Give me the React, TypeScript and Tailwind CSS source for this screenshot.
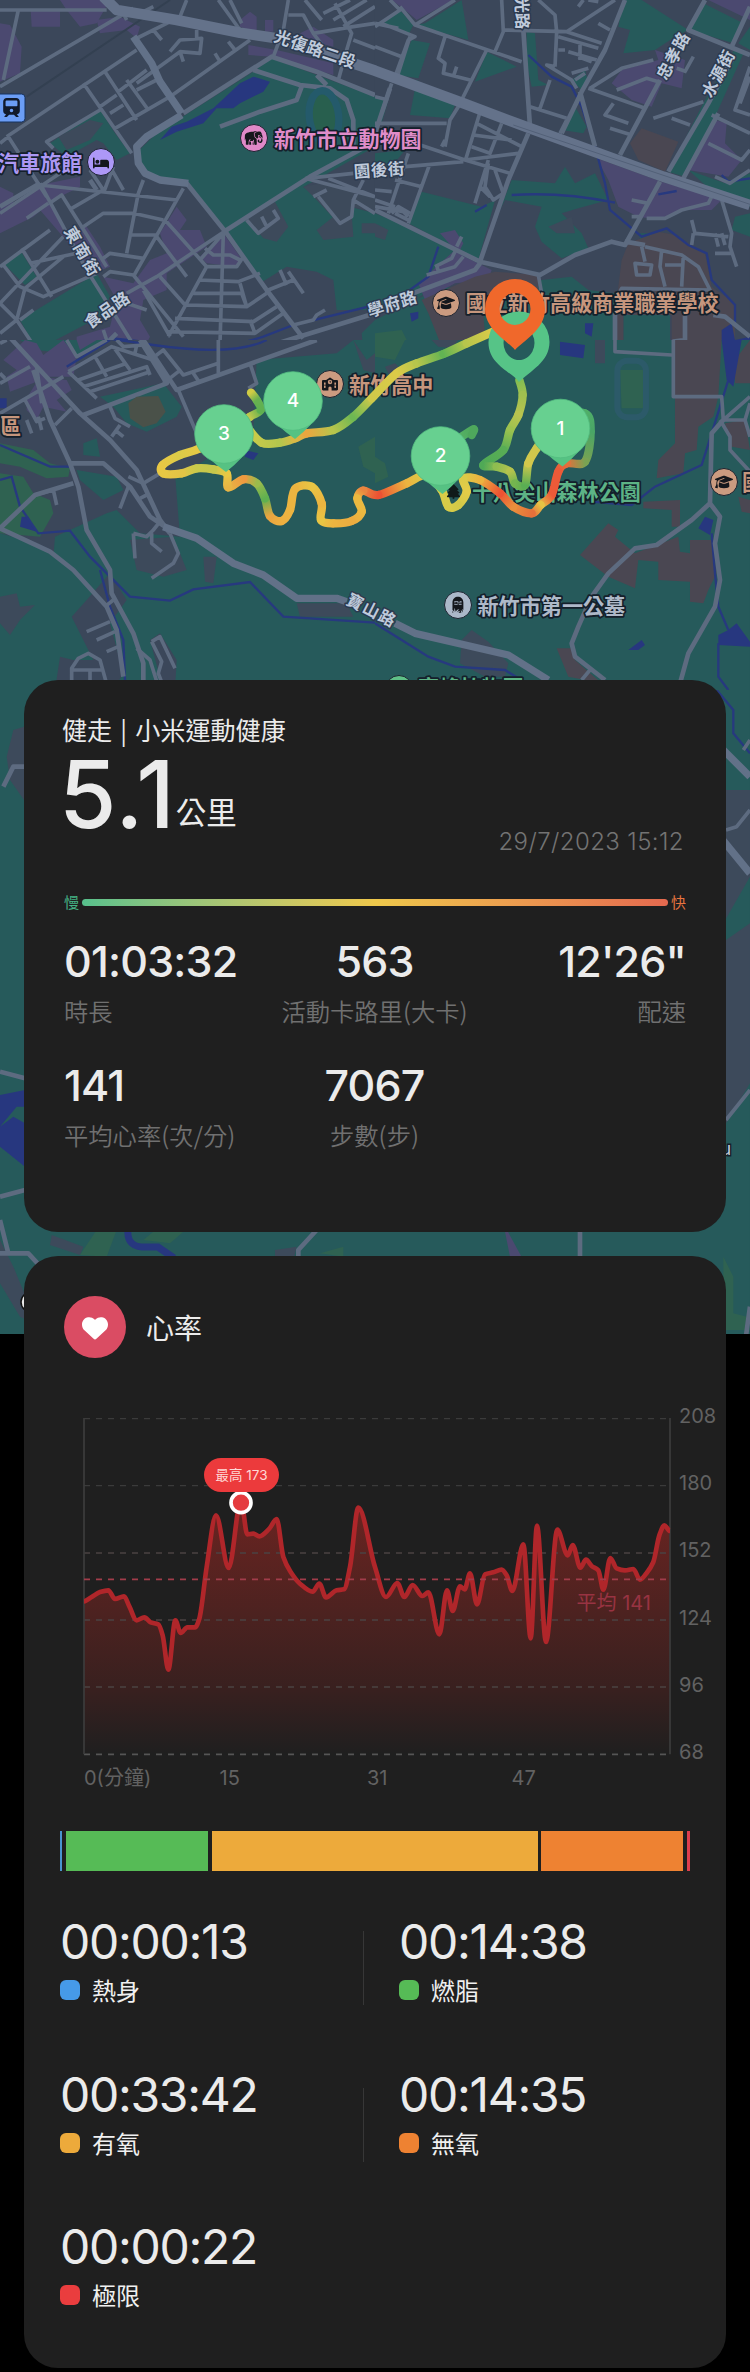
import type { ReactNode } from "react";
import { FaBed, FaGraduationCap, FaHeart, FaSchool, FaTrain, FaTree } from "react-icons/fa6";
import { GiElephant, GiTombstone } from "react-icons/gi";

type Tile = {
  x: number;
  y: number;
  blocks: string;
  parks: string;
  holes: string;
  shops: string;
  campus: string;
  fields: string;
  water: string;
  streams: string;
  minor: string;
  medium: string;
  major: string;
};

// Map geometry, one entry per tile, in units of a third of a pixel.
const tiles: Tile[] = [
  {
    x: 0,
    y: 0,
    blocks: "M0,0H1125V1050H0Z",
    parks:
      "M815,175 L950,225 L1125,290 V440 L680,690 L560,550 L470,540 L425,500 L418,450 L470,400 L760,215Z M680,690 L900,555 L970,600 L1125,640 V930 L1010,930 L1000,840 L950,815 L860,800 L780,850Z M150,430 L300,330 L345,400 L390,460 L350,480 L310,430 L290,420 L200,470Z M10,790 L60,750 L110,830 L75,855Z M60,960 L290,820 L330,890 L300,950 L110,1050Z M1085,1000 L1125,960 V1050 H1090Z",
    holes:
      "M740,655 L825,605 L865,680 L830,725 L790,715Z M950,690 L1000,650 L1055,640 L1060,710 L970,720Z M1085,670H1125V700H1085Z M910,560 L990,545 L1125,590 V640 L1060,620 L1050,670 L1020,675 L950,600Z M175,410 L270,360 L310,370 L270,420 L200,450Z",
    shops:
      "M0,70 L30,75 L65,140 L60,220 L0,245Z M92,30H180V80H95Z M180,0H330L290,70 L240,80 L200,30Z M290,60 L360,50 L420,80 L410,115 L380,90 L300,100Z M720,60 L750,35 L770,50V100L720,80Z M795,60H820V95H795Z M745,135 L830,150 L1000,190 L1000,225 L815,170 L745,165Z M900,100 L940,80 L1000,120 V140 L920,120Z M0,560 L40,580 V620 L0,640Z M0,640 L120,555 L240,530 L240,560 L160,600 L100,650 L0,700Z M120,630 L150,600 L190,690 L260,680 L300,740 L330,800 L280,820 L230,760 L180,700Z M310,830 L400,850 L450,780 L500,760 L480,700 L530,620 L560,660 L540,690 L600,690 L620,740 L560,780 L500,820 L500,870 L430,900 L420,960 L450,1010 L430,1050 L230,1050 L230,1010 L330,980 L350,900Z M600,770 L670,700 L720,770 L710,800 L620,790Z",
    campus: "",
    fields: "M940,310 L1000,290 L1010,370 L985,395 L940,380Z",
    water:
      "M480,420 L515,380 L560,365 L640,325 L720,250 L760,230 L810,245 L790,275 L720,310 L700,325 L650,325 L610,370 L530,395Z",
    streams: "M200,1050 L340,1015 L520,1035 Q640,1060 790,1010 L880,975 L1125,915",
    minor:
      "M0,30H320 M55,30 L10,240 M0,260 L400,25 M460,20 L420,40 M20,410 L410,150 M25,410 L140,590 M160,445 L140,425 L300,330 M0,430 L25,410 M380,60 L370,40 M400,120 L500,70 L540,50 L560,0 M460,90 L485,120 M410,250 L540,155 L600,160 L605,115 L540,120 L510,155 M540,155 L550,185 M250,250 L395,460 M315,215 L410,360 M380,240 L445,330 M355,275 L440,210 M410,270 L470,240 M300,320 L350,285 M330,340 L370,315 M345,385 L510,290 M510,290 L750,120 M645,160 L660,185 M685,125 L705,150 M590,90V120 M655,0 L720,90 M690,0 L725,70 M865,0 L850,90 L820,170 M865,45 L910,45 L940,100 L1060,80 M940,100 L970,140 M915,0 L965,60 M1005,10 L1055,100 L1040,150 L1015,240 M1060,80 L1125,70 M970,40 L1050,0 M1000,60 L1100,0 M1030,80 L1125,20 M1060,120 L1125,145 M270,510 L310,570 M340,500 L310,580 M330,500 L370,570 M0,640 L240,480 M120,555 L530,600 M155,605 L185,585 L270,720 L320,800 M80,655 L145,610 M250,680 L310,640 L400,640 L490,660 M215,625 L310,570 M415,580 L380,760 M390,705 H470 M430,540 L415,580 M550,565 L400,830 M495,660 L620,800 M470,710 L560,830 M310,775 L330,760 L430,775 M120,550 L260,810 L410,1050 M310,830 L330,815 L400,825 L550,1010 M0,910 L190,710 M10,795 L60,860 L130,890 L290,820 M75,865 L190,770 M0,800 L150,690 M65,745 L155,890 M90,790 L230,760 M0,910 L50,960 L110,1050 M0,1000 L50,960 L75,865 M60,960 L100,930 M200,1020 L220,1050 M310,990 L330,1050 M380,880 L470,830 L680,690 M440,930 L380,910 M480,830 L560,920 M430,870 L510,1010 M670,700 L660,1030 M670,700 L600,780 M615,745 L640,765 L690,765 L720,780 M620,800 L710,800 L730,770 M595,840 L715,845 L780,820 M620,800 L505,1010 M580,880 L725,880 L740,920 L800,880 M560,915 L740,920 L720,850 M525,955 L760,965 L830,920 M500,995 L765,1000 L750,960 M765,1000 L850,940 M740,660 L775,700 L835,655 L820,630 M800,680 L785,650 M840,810 L860,855 M865,815 L910,880 M805,870 L880,840 M880,975 L940,960 L950,945 L975,930 M920,535 L1060,520 M915,535 L1125,590 M940,590 L980,570 M955,590 L1020,670 L1055,650 L1060,600 L1090,540 M1060,600 L1125,640 M985,535 L1125,590",
    medium:
      "M0,620 L120,550 M550,340 L760,205 L815,170 L950,215 L1125,285 M760,210 L900,255 L990,265 L1040,300 L1060,360 L1060,440 M905,260 L890,300 L780,335 L660,380 M950,225 L980,255 M560,550 L680,700 L800,870 L910,1015 M680,690 L930,530 L1125,425 M800,1040 L1125,940 M270,540 L290,570 M300,1050 L350,1000",
    major: "M400,110 L455,190 L480,245 L545,340 M545,345 L440,410 L410,440 L415,490 L435,520 L480,540 L565,550",
  },
  {
    x: 375,
    y: 0,
    blocks: "M0,0H1125V1050H0Z",
    parks:
      "M150,70 L260,0 L280,120 L120,75Z M20,75 L75,30 L115,75 L100,105Z M110,120 L165,130 L130,235 L65,225Z M335,155 L425,200 L300,245Z M455,95 L480,100 L490,240 L520,255 L470,260 L455,190Z M125,240 L240,315 L225,355 L105,345Z M0,290 L40,300 L20,370 L0,370Z M745,0 L800,0 L940,90 L900,110 L840,150 L745,160 L765,90 L730,80Z M985,10 L1105,70 L1075,130 L945,90Z M1110,150 L1020,350 L930,530 L880,515 L985,310 L1080,145Z M1125,80 L1090,130 L1125,150Z M590,240 L630,210 L640,250 L620,270Z M600,320 L635,380 L625,400 L560,390Z M0,460 L90,450 L50,500 L0,500Z M140,575 L320,620 L360,600 L310,780 L100,670Z M0,640 L100,680 L310,790 L180,860 L90,920 L0,940Z M410,540 L540,550 L570,500 L600,550 L660,520 L700,600 L610,625 L560,640 L620,700 L640,745 L560,775 L500,725 L480,680 L500,620 L390,600 L370,640Z M940,510 L1050,550 L1125,520 L1125,620 L1030,590Z M500,840 L590,830 L640,870 L720,880 V1050 H0 V960 L120,900 L200,860 L330,870Z M745,945H885V1050H745Z M790,700 L850,700 L860,760 L810,760Z M1080,650 L1125,640 V710 L1070,690Z M1010,960 L1060,940 L1060,1050 H1000Z",
    holes: "M0,670 L40,690 L30,720 L0,710Z M520,680 L590,650 L600,700 L545,700Z",
    shops:
      "M50,0H235 L125,60 L90,30Z M1000,0H1125V60Z M840,150 L930,180 L920,265 L860,250 L830,320 L770,300 L710,250 L740,210 L850,180Z M1020,360 L1055,370 L1050,430 L1100,480 L1060,530 L940,510 L980,430Z M665,475 L860,545 L1040,600 L1010,630 L920,630 L860,660 L790,650 L730,620 L700,540Z M195,700 L240,690 L265,730 L250,760 L350,810 L340,840 L240,850 L150,900 L130,850 L240,750Z",
    campus:
      "M800,385 L910,425 L870,515 L790,480 L765,430Z M850,695 L900,705 L990,760 L1010,860 L1080,910 V1050 H890 V945 H745 V1050 H720 L730,860 L740,780 L760,730Z M360,815 L490,825 L490,880 L320,890 L330,1000 L200,1040 L160,940 L140,900 L300,830Z",
    fields: "M0,1000 L80,990 L110,1050 H0Z",
    water:
      "M105,940 L130,935 L130,955 L110,965Z M630,970 L655,970 L650,1010 L630,1000Z M555,1025 L630,1035 L620,1050H550Z M1040,990 L1070,970 L1080,1020 L1125,1010 V1050 H1040Z",
    streams:
      "M460,165 L530,230 L590,260 L620,320 L660,440 L690,550 L705,630 L800,710 L875,685 L940,735 L995,760 L1010,840 L1080,915 V980 M410,585 Q560,575 720,608 M300,635 L335,615 M850,583 L905,573 M190,740 L160,830 L90,880 M1040,525 L1060,545 L1125,535",
    minor:
      "M0,80 L75,30 L45,0 M20,70 L120,110 L100,120 L60,230 M75,20 L120,75 L440,185 M120,75 L240,0 M0,70 L70,85 M0,140 L80,170 M105,110 L65,235 M210,110 L190,175 L210,190 L205,220 L285,240 M245,200 L235,230 M335,150 L250,320 L225,360 L210,440 M380,0 L385,95 L360,155 M385,90 L575,95 L680,130 M490,0 L540,45 L545,95 L540,200 M575,95 L720,0 M550,110 L670,145 M550,150 H570 M610,170 L650,185 M580,155 L665,180 M615,135V180 M540,200 L515,195 L590,240 L605,265 M590,220 L640,205 M600,240 L630,220 M670,70 L705,90 M640,0 L670,5 M625,0 L610,20 M525,240 L495,325 M465,320 L575,355 M575,360 L555,400 M640,265 L810,325 M645,265 L740,205 L835,180 M725,270 L815,235 L850,245 M715,310 L690,345 L760,370 M705,385 L770,405 M835,355 L985,305 M890,355 L945,375 M930,215 L955,170 M905,205 L935,215 M1010,345 L1125,400 M1125,200 L1080,330 L1125,345 M1125,230 L1095,310 M1000,430 L1100,480 L1125,450 M0,370 H215 M0,290 L40,300 M50,250 L20,340 M320,320 L270,485 M380,370 L345,460 L290,440 M305,370 L440,440 M295,405 L410,420 M120,430 L270,480 L430,460 M90,500 L265,485 M200,440 L210,420 M165,490 L100,670 M60,540 L140,560 M0,570 L50,575 M0,620 L85,635 L100,650 M100,460 L40,640 M0,600 L60,620 M270,480 L405,520 M340,480 L300,610 M340,490 L330,560 L355,600 L385,580 L360,510 M315,560 L345,590 M60,640 L100,660 M770,600 L820,610 M770,650 L800,650 M815,655 L870,655 L920,630 L1000,610 L1010,590 M1040,600 L1070,700 L1065,740 L1085,800 M950,660 L960,700 L1060,710 M950,735 L955,700 M1020,700 L1030,740 M1040,700 L1050,735 M1020,760 H1070 M800,740 L810,785 M780,790 L830,795 L825,825 H785Z M860,750 L855,800 L870,860 M870,795 H925 M925,765 L920,860 M810,740 L920,765 L970,800 L1005,870 L740,865 L720,900 M155,825 L240,800 L265,770 M180,800 L230,775 L245,745 M260,710 L245,740 M185,795 L190,815 M490,825 L500,880 M1125,510 L1065,550 L1020,530 M50,640 L70,620 L105,640",
    medium:
      "M445,90 L465,380 M750,0 L690,150 L620,275 L560,400 M990,0 L940,90 L1125,165 M1125,20 L1070,140 M855,240 L735,465 M1070,180 L1000,310 L880,515 M1030,340 L925,535 M615,275 L660,440 M460,400 L400,540 L315,785 M100,885 L300,810 L315,790 M0,630 L315,785 L495,825 L600,765 L710,725 L750,735 L855,545 M750,725 L810,735 M720,940 V1050 M930,945 V1020 L895,1025 V1050 M1015,945 L1050,950 L1125,1010 M45,265 L0,400",
    major: "",
  },
  {
    x: 0,
    y: 340,
    blocks: "M0,0H1125V1050H0Z",
    parks:
      "M60,0 L330,0 L240,45 L110,30Z M300,170 L490,130 L545,200 L530,230 L440,275 L380,250 L340,200Z M770,60 L1010,40 L1060,0 H1125 V1050 H525 L530,960 L480,880 L450,900 L490,1050 H340 L370,1000 L330,850 L380,780 L330,700 L260,780 L215,830 L280,960 L220,960 L180,950 L165,1050 H0 V580 L110,610 L160,650 L165,590 L320,520 L350,510 L380,540 L420,580 L540,590 L525,400 L600,370 L760,270Z M230,390 L350,410 L370,450 L310,480 L240,420Z M250,310 L290,295 L300,350 L250,345Z",
    holes:
      "M0,770 L50,760 L60,800 L105,795 L60,840 L30,885 L0,850Z M390,600 L520,590 L540,640 L560,690 L490,710 L410,690Z M610,650 L650,650 L640,730 L615,725Z M890,790 L1040,790 L1060,830 L900,830Z M1060,0 L1100,60 L1125,40 L1125,100 L1090,90Z",
    shops:
      "M10,60 L75,0 L110,10 L130,45 L190,0 L230,50 L220,110 L150,110 L30,155 L20,110 L50,90Z M80,175 L120,110 L200,120 L215,150 L170,180 L200,215 L130,200 L110,240 L80,210Z M230,0 H290 L240,30Z",
    campus: "",
    fields:
      "M0,310 L100,330 L150,370 L210,385 L205,410 L140,415 L60,380 L0,370Z M0,400 L70,410 L100,460 L150,480 L160,520 L120,590 L0,580Z M1075,320 L1125,290 V400 L1090,380Z",
    water: "M65,530 L85,530 L110,575 L60,560Z M0,175H20V205H0Z M735,330 L775,340 L760,360 L735,350Z",
    streams:
      "M320,-5 L460,15 Q700,50 800,0 M0,315 L150,380 L215,380 M0,420 L35,410 L60,500 L115,580 L210,572 L270,650 L390,770 L510,782 L580,748 L750,726 L850,830 L1125,848 M300,690 L330,800 L370,900 L375,1020 M200,80 L330,0",
    minor:
      "M0,10 L20,0 M0,100 L15,115 M0,130 L90,80 M0,220 L190,110 M75,180 L110,245 L135,235 M80,240 L95,280 M115,230 L125,270 M110,80 L125,190 M165,255 L215,205 M200,0 L230,50 L320,0 M205,95 L335,20 L460,60 M235,120 L380,70 M250,140 L440,80 L450,105 M270,155 L450,95 M285,50 L320,110 M340,20 L390,90 M205,95 L290,175 M405,40 L410,15 M450,60 L490,30 L550,105 L655,70 M580,100 L600,130 M490,130 L535,95 M655,0 V100 M350,0 L370,20 L430,15 M750,70 L770,130 L745,145 M535,150 L590,280 M330,200 L345,235 L390,260 M360,255 L335,290 M345,270 L370,290 M385,410 L430,430 L480,400 M385,440 L360,505 M420,475 L440,465 M105,465 L160,450 L170,495 M400,580 L405,655 M400,580 L440,590 L460,570 L480,545 M455,580 L455,610 L485,635 M510,580 L535,640 L520,670 L455,715 M315,800 L340,780 M260,875 L330,845 M290,900 L345,875 M320,935 L355,920 M215,1020 L215,985 L235,955 L265,940 L300,960 L325,1050 M215,990 H310 M270,990V1020 M455,905 L480,890 L525,985 M455,905 L485,965 L475,1000 L490,1040 M410,925 L450,960 L475,1040",
    medium:
      "M0,-40 L120,90 L240,220 L330,300 L410,390 L480,540 L510,580 M100,90 L120,150 L150,240 L210,370 L235,440 L260,570 L330,690 L335,760 L400,880 L430,970 L430,1050 M215,370 L310,370 L390,440 L450,530 L510,570 M250,225 L500,130 L420,0 M430,0 L530,150 L950,0 M0,565 L105,465 L220,430 M0,565 L150,635 L220,690 L320,800 L350,870 L370,1010",
    major: "M490,560 L590,595 L700,670 L790,705 L890,775 L1010,775 L1040,785",
  },
  {
    x: 375,
    y: 340,
    blocks: "",
    parks: "M0,0H1125V1050H0Z",
    holes:
      "M260,900 L290,870 L340,905 L400,970 L390,1010 L330,1010 L255,970Z M170,0H250 L230,25 L190,20Z M660,0H690V70L660,70Z M30,80 L60,70 L90,100 L50,120Z",
    shops: "",
    campus:
      "M900,0 H1040 L1030,170 L1015,230 L970,260 L965,330 L930,340 L925,400 L845,415 L850,360 L900,310 V170Z M1050,250 L1110,240 L1125,330 L1070,320Z M1080,60 L1125,0 V130 H1080Z M700,550 L730,570 L720,590 L780,640 L910,590 L915,635 L945,640 V600 L1010,600 L1025,700 L1000,750 L985,790 L945,785 V725 L850,720 L850,665 L790,660 L780,745 L700,710 L615,645Z M805,485 L915,480 V560 L890,560 V510 L805,505Z M545,925 L590,925 L600,960 L680,1030 L580,1010Z M1090,470 L1125,480 V520 L1100,515Z",
    fields: "M735,90 H805 V205 H740Z M0,0 H90 L60,60 L0,50Z M0,350 L30,370 L40,410 L0,430Z",
    water:
      "M555,5 L630,15 L625,55 L555,45Z M970,565 L990,530 L1015,540 L1005,585Z M1030,885 L1060,870 L1085,850 L1125,905 V920 L1030,915Z M760,930 L800,900 L810,915 L790,930Z M1040,0 H1100 L1075,140 L1055,120Z",
    streams:
      "M1060,120 L1010,280 L980,375 L840,440 L770,495 L650,485 M1010,580 L1020,700 L1030,800 L1060,870 M1030,910 V1010 L1060,1050 M0,850 L160,950 L240,980 L390,990 L430,1015",
    minor:
      "M720,0 V35 L890,45 M895,0 V170 H1040 L1045,240 L1125,170 M1045,240 L1110,240 L1125,190 M1110,240 L1125,290 M1035,240 L1065,290 V330 L1125,395 M620,1020 L645,990",
    medium:
      "M1045,240 L1010,280 L1005,490 L950,540 L845,615 L780,625 L700,700 L650,770 L610,860 L590,910 L600,950 L690,1020 M1005,490 L1035,530 L1020,610 L1035,720 L1020,800 L940,940 L915,1030",
    major: "M60,850 L120,880 L400,945 L520,1020",
  },
  {
    x: 0,
    y: 690,
    blocks: "",
    parks: "M0,0H2250V1940H0Z",
    holes:
      "M20,200 L40,120 L72,110 V330 L30,270Z M0,1650 L40,1730 L90,1850 L80,1890 L60,1880 L0,1780Z M155,1635 L250,1670 L240,1695 L150,1665Z M825,1680 L890,1670 L880,1710 H825Z M2178,300 L2250,300 V560 L2170,700 V420Z M2178,750 L2250,700 V1180 L2178,1300Z",
    shops: "M1510,1600 L1570,1710 L1530,1700Z",
    campus: "",
    fields:
      "M240,1695 L290,1620 L350,1620 L320,1700Z M430,1650 L460,1625 L550,1625 L510,1660Z M2170,1700 L2200,1760 V1870 L2240,1880 L2250,1920 L2170,1920Z M960,1690 L1030,1670 V1700Z",
    water: "M0,1215 L75,1200 V1300 L40,1280 L0,1310 V1370 L75,1430 V1250 L50,1250 L0,1310Z",
    streams: "M2150,0 L2200,60 V130 L2250,190",
    minor: "M2178,420 L2210,410 L2250,360 M2230,180 L2250,150 M2178,1290 L2250,1200",
    medium: "M10,290 L40,230 L72,230 M0,1145 L75,1165 M0,1690 L85,1690 L140,1750 M0,1520 L75,1500 M0,1590 L25,1690 M895,1710 V1680 L950,1620 M1740,1620 V1710 M2235,1960 L2250,1850",
    major: "M2150,160 L2250,260 M2160,440 L2250,550",
  },
];

// Recorded track: x, y and the pace colour at that point.
const track: [number, number, string][][] = [
  [
    [1558, 120, "#83bd52"], [1568, 165, "#9fc04f"], [1555, 225, "#b8c44f"], [1530, 270, "#9cc24f"],
    [1510, 330, "#58ad55"], [1450, 375, "#4fa956"], [1490, 380, "#8fbd50"], [1530, 395, "#b4c34d"],
    [1545, 430, "#74b54f"], [1575, 435, "#5aae53"], [1585, 370, "#d3c84c"], [1610, 325, "#cfc84c"],
    [1670, 240, "#5bb25f"], [1755, 220, "#4fae68"], [1772, 275, "#4aa566"], [1755, 365, "#79a353"],
    [1700, 370, "#e2713c"], [1675, 395, "#ec5a38"], [1655, 465, "#ec5a38"], [1622, 495, "#e7c345"],
    [1595, 520, "#e6703a"], [1540, 500, "#ea8f3c"], [1500, 460, "#ec5233"], [1440, 420, "#ecb440"],
    [1390, 415, "#dccb48"], [1400, 455, "#e4cd48"], [1375, 495, "#d2c948"], [1345, 500, "#d8cc48"],
    [1325, 450, "#d8cc48"], [1280, 405, "#d8cc48"], [1220, 430, "#ecb440"], [1135, 465, "#ec5233"],
    [1090, 452, "#ea8640"], [1072, 475, "#ecb940"], [1085, 515, "#ecb940"], [1055, 543, "#ecac40"],
    [1000, 550, "#ecb440"], [963, 540, "#e8c544"], [965, 490, "#ecb440"], [935, 440, "#e8c544"],
    [885, 447, "#ecb440"], [870, 510, "#ecb440"], [845, 543, "#eeb040"], [810, 528, "#eaa540"],
    [795, 475, "#5fb050"], [770, 430, "#9bbb4c"], [730, 418, "#ee9a40"], [685, 442, "#e8b544"],
    [680, 400, "#e8c844"], [640, 388, "#c6c84b"], [590, 385, "#c9c94b"], [545, 400, "#e2c446"],
    [490, 400, "#e8c844"], [488, 375, "#e8c844"], [540, 345, "#dccb48"], [600, 325, "#e8c844"],
    [690, 270, "#d8cc48"], [750, 230, "#bcc84c"], [782, 210, "#5fb050"], [770, 180, "#66b050"],
    [753, 158, "#d0cc44"],
  ],
  [
    [740, 260, "#d0cc44"], [785, 308, "#c2c94b"], [840, 308, "#b4c64d"], [885, 295, "#d8b846"],
    [920, 280, "#eba63f"], [1000, 270, "#b8c44c"], [1060, 230, "#6db853"], [1115, 175, "#cfc94a"],
    [1190, 100, "#dccb48"], [1250, 70, "#b7c54c"], [1330, 42, "#62b353"], [1400, 10, "#b7c54c"],
    [1480, -25, "#dccb48"],
  ],
  [
    [1370, 300, "#57b467"], [1420, 268, "#4ea75c"], [1415, 285, "#4ea75c"],
  ],
];

// One curve per pair of points, so each can carry its own gradient.
const segments = track.flatMap((line) =>
  line.slice(1).map(([x2, y2, to], i) => {
    const [x1, y1, from] = line[i];
    const [x0, y0] = line[Math.max(i - 1, 0)];
    const [x3, y3] = line[Math.min(i + 2, line.length - 1)];
    const d = `M${x1},${y1}C${x1 + (x2 - x0) / 6},${y1 + (y2 - y0) / 6} ${x2 - (x3 - x1) / 6},${y2 - (y3 - y1) / 6} ${x2},${y2}`;
    return { x1, y1, x2, y2, from, to, d };
  })
);

function Poi({ x, y, color, children }: { x: number; y: number; color: string; children?: ReactNode }) {
  return (
    <g transform={`translate(${x} ${y})`} color="#15171c">
      <circle r="13.5" fill={color} stroke="#1c2330" strokeWidth="1" />
      {children}
    </g>
  );
}

function MapText({ x, y, color, children }: { x: number; y: number; color: string; children: string }) {
  return (
    <text
      x={x}
      y={y}
      fill={color}
      stroke="#14202b"
      strokeWidth="3.5"
      strokeLinejoin="round"
      paintOrder="stroke"
      className="text-[21.1px] font-bold"
    >
      {children}
    </text>
  );
}

function RoadText({ x, y, angle, gap, children }: { x: number; y: number; angle: number; gap: number; children: string }) {
  return (
    <g transform={`translate(${x} ${y}) rotate(${angle})`}>
      {children.split("").map((char, i, all) => (
        <text
          key={i}
          x={(i - (all.length - 1) / 2) * gap}
          y="6"
          textAnchor="middle"
          fill="#bfcadb"
          stroke="#2c3a50"
          strokeWidth="3"
          strokeLinejoin="round"
          paintOrder="stroke"
          className="text-[16.5px] font-bold"
        >
          {char}
        </text>
      ))}
    </g>
  );
}

function KmPin({ x, y, label }: { x: number; y: number; label: number }) {
  return (
    <g transform={`translate(${x} ${y})`}>
      <path d="M-28,9 Q-18,24 2,38 Q20,24 28,9Z" fill="#56c283" />
      <circle r="29.3" fill="#67d090" stroke="#53bd80" strokeWidth="0.8" />
      <text y="6" textAnchor="middle" fill="#fff" className="font-[Inter] text-[19px] font-medium">
        {label}
      </text>
    </g>
  );
}

function RouteMap() {
  return (
    <svg
      width="750"
      height="1334"
      viewBox="0 0 750 1334"
      className="col-start-1 row-start-1 bg-[#265a5b] font-['Noto_Sans_CJK_TC',sans-serif]"
    >
      <defs>
        {segments.map(({ x1, y1, x2, y2, from, to }, i) => (
          <linearGradient key={i} id={`pace-${i}`} gradientUnits="userSpaceOnUse" x1={x1} y1={y1} x2={x2} y2={y2}>
            <stop stopColor={from} />
            <stop offset="1" stopColor={to} />
          </linearGradient>
        ))}
        {tiles.map((tile, i) => (
          <clipPath key={i} id={`tile-${i}`}>
            <rect width={i === 4 ? 2250 : 1125} height={i === 4 ? 1940 : 1050} />
          </clipPath>
        ))}
      </defs>
      {[4, 0, 1, 2, 3].map((n) => {
        const tile = tiles[n];
        return (
          <g key={n} transform={`translate(${tile.x} ${tile.y}) scale(0.33333)`} clipPath={`url(#tile-${n})`}>
            <path d={tile.blocks} fill="#3b475a" />
            <path d={tile.parks} fill="#265a5b" />
            <path d={tile.holes} fill="#3d4a5b" />
            <path d={tile.shops} fill="#4b4970" />
            <path d={tile.campus} fill="#4a4752" />
            <path d={tile.fields} fill="#2f6251" />
            <path d={tile.water} fill="#27377f" />
            <path d={tile.streams} fill="none" stroke="#27397f" strokeWidth="7" />
            <g fill="none" stroke="#5d6b80" strokeLinejoin="round">
              <path d={tile.minor} strokeWidth="11" />
              <path d={tile.medium} strokeWidth="14" />
              <path d={tile.major} strokeWidth="22" stroke="#627188" />
            </g>
          </g>
        );
      })}
      {/* stadium, sports grounds and the railway */}
      <g transform="scale(0.33333)">
        <ellipse cx="972" cy="350" rx="44" ry="78" fill="#285f4e" stroke="#245a6b" strokeWidth="22" transform="rotate(-6 972 350)" />
        <rect x="1852" y="1082" width="86" height="170" rx="30" fill="none" stroke="#2c5a69" strokeWidth="18" />
        <path d="M385,1210 L410,1190 L475,1188 L497,1235 L470,1270 L430,1282 L390,1255Z" fill="#4a5149" />
        <path d="M80,290 L510,0" stroke="#334051" strokeWidth="6" />
        <path
          d="M310,-10 L350,30 L530,60 L720,98 L850,118 L1060,190 L1125,212 L1390,310 L1590,385 L1990,530 L2250,615"
          fill="none"
          stroke="#64728a"
          strokeWidth="32"
          strokeLinejoin="round"
        />
        <path d="M1540,375 L2250,613" stroke="#526077" strokeWidth="3" />
      </g>
      <path d="M128,1228 Q126,1246 142,1247 L158,1247 L174,1258" fill="none" stroke="#27377f" strokeWidth="7" />

      <RoadText x={315} y={49} angle={19} gap={17}>光復路二段</RoadText>
      <RoadText x={522} y={13} angle={88} gap={16}>光路</RoadText>
      <RoadText x={379} y={170} angle={-4} gap={17}>園後街</RoadText>
      <RoadText x={82} y={251} angle={60} gap={18.5}>東南街</RoadText>
      <RoadText x={107} y={310} angle={-35} gap={17}>食品路</RoadText>
      <RoadText x={392} y={304} angle={-18} gap={17}>學府路</RoadText>
      <RoadText x={673} y={56} angle={-62} gap={17}>忠孝路</RoadText>
      <RoadText x={718} y={74} angle={-62} gap={17}>水源街</RoadText>
      <RoadText x={371} y={610} angle={27} gap={18}>寶山路</RoadText>

      <MapText x={274} y={147} color="#e08cc9">新竹市立動物園</MapText>
      <MapText x={-2} y={171} color="#ad98f3">汽車旅館</MapText>
      <MapText x={465.5} y={311} color="#c6967d">國立新竹高級商業職業學校</MapText>
      <MapText x={349} y={393} color="#c6967d">新竹高中</MapText>
      <MapText x={472} y={500} color="#5db386">十八尖山森林公園</MapText>
      <MapText x={477.5} y={614} color="#aeb9c8">新竹市第一公墓</MapText>
      <MapText x={0} y={434} color="#c6967d">區</MapText>
      <MapText x={742} y={490} color="#c6967d">國</MapText>
      <MapText x={418} y={696} color="#5db386">高峰植物園</MapText>
      <text x="721" y="1155" fill="#c5cfdd" stroke="#14202b" strokeWidth="3" paintOrder="stroke" className="text-[17px]">u</text>

      <Poi x={254} y={138} color="#e089c8">
        <GiElephant x="-10" y="-10" size={20} />
      </Poi>
      <Poi x={101} y={162} color="#ad98f7">
        <FaBed x="-8" y="-7" size={16} />
      </Poi>
      <Poi x={446} y={303} color="#cb9b80">
        <FaGraduationCap x="-9" y="-9" size={18} />
      </Poi>
      <Poi x={330} y={384} color="#cb9b80">
        <FaSchool x="-8" y="-8" size={16} />
      </Poi>
      <Poi x={724} y={482} color="#cb9b80">
        <FaGraduationCap x="-9" y="-9" size={18} />
      </Poi>
      <Poi x={458} y={605} color="#acb8c9">
        <GiTombstone x="-9" y="-9" size={18} />
      </Poi>
      <Poi x={399} y={689} color="#5fc087">
        <FaTree x="-7" y="-8" size={15} />
      </Poi>
      <circle cx="31" cy="1302" r="10" fill="#e8e8e8" stroke="#111" strokeWidth="1.5" />
      <rect x="-4" y="94" width="29" height="28" rx="3.5" fill="#6b9df5" stroke="#17335f" />
      <FaTrain x="2" y="98" size={19} color="#111a2c" />

      <g transform="translate(0 340) scale(0.33333)" fill="none">
        {segments.map(({ d }, i) => (
          <path key={i} d={d} stroke={`url(#pace-${i})`} strokeWidth="25" strokeLinecap="round" />
        ))}
      </g>
      <FaTree x="446" y="484" size={15} color="#0f1a1a" />

      <KmPin x={560.5} y={428.5} label={1} />
      <KmPin x={440.5} y={456} label={2} />
      <KmPin x={224} y={434} label={3} />
      <KmPin x={293} y={401} label={4} />
      <g fillRule="evenodd">
        <path
          d="M519,382 C514,373 488,365 488.500,342 A30.500,30.500 0 0 1 549.500,342 C549.500,362 530,371 519,382Z M519,326 a15.500,17 0 1 0 0.010,0Z"
          fill="#56c487"
        />
        <path
          d="M515,350 C508,341 485,330 485,309 A30,30 0 0 1 545,309 C545,330 523,341 515,350Z M515,293 a15.500,16 0 1 0 0.010,0Z"
          fill="#f0682b"
        />
      </g>
    </svg>
  );
}

// Heart-rate curve, in units of a third of a pixel inside the plot.
const heartRate: [number, number][] = [
  [102, 633], [125, 620], [150, 605], [175, 600], [195, 626], [222, 618], [238, 648], [260, 690], [283, 681],
  [302, 696], [325, 702], [338, 735], [355, 838], [376, 690], [392, 728], [412, 711], [435, 711], [448, 685],
  [470, 530], [498, 375], [536, 533], [573, 330], [592, 432], [610, 430], [628, 438], [658, 415], [680, 386],
  [700, 500], [722, 545], [750, 580], [788, 604], [808, 580], [828, 621], [860, 600], [882, 597], [900, 530],
  [925, 352], [975, 530], [1008, 620], [1042, 578], [1063, 620], [1088, 584], [1117, 617], [1135, 606],
  [1168, 732], [1191, 600], [1208, 662], [1230, 588], [1244, 597], [1260, 549], [1281, 642], [1305, 552],
  [1330, 546], [1355, 538], [1370, 555], [1387, 602], [1420, 462], [1442, 744], [1461, 406], [1488, 755],
  [1522, 418], [1553, 495], [1568, 464], [1591, 532], [1608, 508], [1625, 527], [1645, 540], [1660, 598],
  [1681, 503], [1700, 534], [1725, 540], [1750, 536], [1770, 568], [1790, 548], [1810, 515], [1828, 435],
  [1843, 405], [1860, 422],
];

function slopeAt(i: number) {
  if (i === 0 || i === heartRate.length - 1) return 0;
  const [x0, y0] = heartRate[i - 1];
  const [x1, y1] = heartRate[i];
  const [x2, y2] = heartRate[i + 1];
  const before = (y1 - y0) / (x1 - x0);
  const after = (y2 - y1) / (x2 - x1);
  if (before * after <= 0) return 0;
  return (2 * before * after) / (before + after);
}

const curve = heartRate
  .map(([x, y], i) => {
    if (i === 0) return `M${x},${y}`;
    const [px, py] = heartRate[i - 1];
    const dx = (x - px) / 3;
    return `C${px + dx},${py + dx * slopeAt(i - 1)} ${x - dx},${y - dx * slopeAt(i)} ${x},${y}`;
  })
  .join("");

const gridLines = [85, 286, 488, 689, 890, 1092];

function HeartRateChart() {
  return (
    <div className="ml-[60px] mt-[60px] grid grid-cols-[586px_1fr] font-[Inter,'Noto_Sans_CJK_TC',sans-serif] text-xl leading-5 text-[#626262]">
      <div className="relative h-[337px]">
        <svg width="586" height="337" viewBox="102 83 1758 1011" className="overflow-visible">
          <defs>
            <linearGradient id="area" x1="0" y1="330" x2="0" y2="1092" gradientUnits="userSpaceOnUse">
              <stop stopColor="#6c2421" />
              <stop offset="0.45" stopColor="#4c2220" />
              <stop offset="0.75" stopColor="#38201f" />
              <stop offset="1" stopColor="#1f1f1f" />
            </linearGradient>
          </defs>
          <path d={`${curve}V1092H102Z`} fill="url(#area)" />
          {gridLines.map((y) => (
            <path
              key={y}
              d={`M102,${y}H1860`}
              stroke={y === 1092 ? "#555" : y < 300 ? "#3b3b3b" : "#4b4343"}
              strokeWidth={y === 1092 ? 5 : 4}
              strokeDasharray="18 18"
            />
          ))}
          <path d="M102,83V1092M1860,83V1092" stroke="#3c3c3c" strokeWidth="5" />
          <path d={curve} fill="none" stroke="#b0262a" strokeWidth="14" strokeLinejoin="round" />
          <path d="M102,567H1860" stroke="#a13c4a" strokeWidth="5" strokeDasharray="18 18" />
          <circle cx="573" cy="337" r="30" fill="#e53b3f" stroke="#fff" strokeWidth="11" />
        </svg>
        <span className="absolute left-[120px] top-[40px] flex h-[34px] w-[75px] items-center justify-center rounded-full bg-[#ec3a3c] text-[13.5px] text-[#ffd9d6]">
          最高 173
        </span>
        <span className="absolute right-[19px] top-[175px] text-[#983342]">平均 141</span>
      </div>
      <div className="-mt-[12px] flex h-[356px] flex-col justify-between pl-[9px]">
        <span>208</span>
        <span>180</span>
        <span>152</span>
        <span>124</span>
        <span>96</span>
        <span>68</span>
      </div>
      <div className="mt-[6px] grid grid-cols-4">
        <span>0(分鐘)</span>
        <span className="-ml-[11px]">15</span>
        <span className="-ml-[10px]">31</span>
        <span className="-ml-[12px]">47</span>
      </div>
    </div>
  );
}

function Stat({ value, label, className }: { value: string; label: string; className?: string }) {
  return (
    <div className={className}>
      <div className="h-[50px] font-[Inter] text-[43px] font-medium leading-[50px] tracking-[-0.8px] text-[#ebebeb]">
        {value}
      </div>
      <div className="mt-[9px] h-[32px] whitespace-nowrap text-[24.3px] font-[350] leading-8 text-[#707070]">{label}</div>
    </div>
  );
}

function Zone({ time, label, swatch }: { time: string; label: string; swatch: string }) {
  return (
    <div className="h-[152.5px]">
      <div className="font-[Inter] text-[48px] leading-[56px] tracking-[-1.3px] text-[#ebebeb]">{time}</div>
      <div className="mt-[4px] flex items-center gap-3 text-2xl leading-8 text-[#f0f0f0]">
        <span className={`size-5 rounded-md ${swatch}`} />
        {label}
      </div>
    </div>
  );
}

export default function App() {
  return (
    <div className="grid h-[2372px] w-[750px] grid-cols-1 items-start overflow-hidden bg-black font-['Noto_Sans_CJK_TC',sans-serif]">
      <RouteMap />

      <main className="relative col-start-1 row-start-1 flex flex-col gap-6 px-6 pt-[680px]">
        <section className="h-[552px] rounded-[34px] bg-[#1f1f1f] px-[40px] pt-[31px] text-[#ebebeb]">
          <h1 className="-ml-[2px] h-[33px] text-[25.1px] leading-9 [word-spacing:2.5px]">健走 | 小米運動健康</h1>
          <div className="flex h-[104px] items-baseline justify-between">
            <div className="-ml-[5px] flex items-baseline">
              <span className="font-[Inter] text-[93px] font-medium leading-[100px] tracking-[1px]">5.1</span>
              <span className="relative -top-[4px] text-[30.5px]">公里</span>
            </div>
            <span className="relative top-[22px] mr-[2px] font-[Inter] text-2xl font-light tracking-[0.4px] text-[#737373]">
              29/7/2023 15:12
            </span>
          </div>

          <div className="mt-[42px] flex h-[24px] items-center text-[15px]">
            <span className="w-[18px] text-[#45b486]">慢</span>
            <div className="h-[7px] w-[586px] rounded-full bg-linear-to-r from-[#56c08c] via-[#eec84b] to-[#e4694f]" />
            <span className="pl-[3px] text-[#e8743f]">快</span>
          </div>

          <div className="mt-[22px] grid grid-cols-[200px_221px_1fr] gap-y-[33px]">
            <Stat value="01:03:32" label="時長" />
            <Stat value="563" label="活動卡路里(大卡)" className="flex flex-col items-center" />
            <Stat value={`12'26"`} label="配速" className="text-right" />
            <Stat value="141" label="平均心率(次/分)" />
            <Stat value="7067" label="步數(步)" className="flex flex-col items-center" />
          </div>
        </section>

        <section className="h-[1112px] rounded-[34px] bg-[#1f1f1f] pt-[40px]">
          <div className="ml-[40px] flex h-[62px] items-center gap-5">
            <div className="flex size-[62px] items-center justify-center rounded-full bg-[#da4c63]">
              <FaHeart className="mt-[2px] size-[26px] text-white" />
            </div>
            <h2 className="text-[28px] leading-[60px] text-[#ebebeb]">心率</h2>
          </div>

          <HeartRateChart />

          <div className="ml-[36px] mt-[43px] flex h-10 w-[630px] justify-between">
            <span className="w-[2px] bg-[#4a94cf]" />
            <span className="w-[142px] bg-[#56bb56]" />
            <span className="w-[326px] bg-[#edaa3b]" />
            <span className="w-[142px] bg-[#ee8232]" />
            <span className="w-[3px] bg-[#dc3e4e]" />
          </div>

          <div className="ml-[36px] mt-[43px] grid grid-cols-[303px_36px_1fr]">
            <Zone time="00:00:13" label="熱身" swatch="bg-[#469ae8]" />
            <span className="mt-[17px] h-[74px] w-px bg-[#373737]" />
            <Zone time="00:14:38" label="燃脂" swatch="bg-[#56bb56]" />
            <Zone time="00:33:42" label="有氧" swatch="bg-[#edaa3b]" />
            <span className="mt-[21px] h-[74px] w-px bg-[#373737]" />
            <Zone time="00:14:35" label="無氧" swatch="bg-[#ee8232]" />
            <Zone time="00:00:22" label="極限" swatch="bg-[#ea3d3e]" />
          </div>
        </section>
      </main>
    </div>
  );
}
